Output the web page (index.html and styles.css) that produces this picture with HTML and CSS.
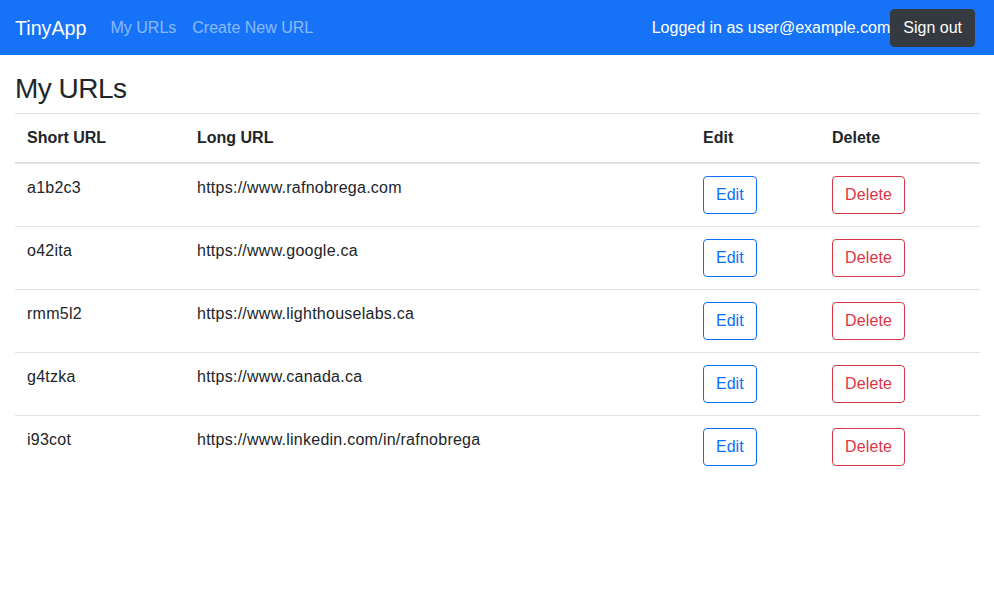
FILE: index.html
```html
<!DOCTYPE html>
<html lang="en">
<head>
<meta charset="utf-8">
<title>TinyApp</title>
<link rel="stylesheet" href="styles.css">
</head>
<body>
<nav class="navbar">
  <div class="nav-left">
    <a class="brand" href="#">TinyApp</a>
    <a class="nav-link" href="#">My URLs</a>
    <a class="nav-link" href="#">Create New URL</a>
  </div>
  <div class="nav-right">
    <span class="user">Logged in as user@example.com</span>
    <button class="btn btn-dark">Sign out</button>
  </div>
</nav>
<main class="content">
  <h3 class="title">My URLs</h3>
  <table class="table">
    <thead>
      <tr>
        <th class="c1">Short URL</th>
        <th class="c2">Long URL</th>
        <th class="c3">Edit</th>
        <th class="c4">Delete</th>
      </tr>
    </thead>
    <tbody>
      <tr><td>a1b2c3</td><td>https://www.rafnobrega.com</td><td><button class="btn btn-outline-primary">Edit</button></td><td><button class="btn btn-outline-danger">Delete</button></td></tr>
      <tr><td>o42ita</td><td>https://www.google.ca</td><td><button class="btn btn-outline-primary">Edit</button></td><td><button class="btn btn-outline-danger">Delete</button></td></tr>
      <tr><td>rmm5l2</td><td>https://www.lighthouselabs.ca</td><td><button class="btn btn-outline-primary">Edit</button></td><td><button class="btn btn-outline-danger">Delete</button></td></tr>
      <tr><td>g4tzka</td><td>https://www.canada.ca</td><td><button class="btn btn-outline-primary">Edit</button></td><td><button class="btn btn-outline-danger">Delete</button></td></tr>
      <tr><td>i93cot</td><td>https://www.linkedin.com/in/rafnobrega</td><td><button class="btn btn-outline-primary">Edit</button></td><td><button class="btn btn-outline-danger">Delete</button></td></tr>
    </tbody>
  </table>
</main>
</body>
</html>
```
FILE: styles.css
```css
* { box-sizing: border-box; }
body {
  margin: 0;
  font-family: "Liberation Sans", Arial, sans-serif;
  font-size: 16px;
  line-height: 1.5;
  color: #212529;
  background: #fff;
}
a { text-decoration: none; }
.navbar {
  display: flex;
  align-items: center;
  justify-content: space-between;
  height: 55px;
  padding: 0 19px 0 15px;
  background: #1673f8;
}
.nav-left { display: flex; align-items: center; }
.brand {
  color: #fff;
  font-size: 19.7px;
  line-height: 30px;
  margin-right: 16px;
}
.nav-link {
  color: rgba(255,255,255,0.5);
  padding: 8px;
}
.nav-right { display: flex; align-items: center; }
.user { color: #fff; }
.btn {
  font-family: inherit;
  font-size: 16px;
  line-height: 24px;
  padding: 6px 12px;
  border: 1px solid transparent;
  border-radius: 4px;
  background: transparent;
  cursor: pointer;
}
.btn-dark { background: #343a40; border-color: #343a40; color: #fff; }
.btn-outline-primary { color: #0d6efd; border-color: #0d6efd; }
.btn-outline-danger { color: #dc3545; border-color: #dc3545; letter-spacing: 0.15px; }
.content { padding: 17px 14px 0 15px; }
.title {
  margin: 0 0 7px;
  font-size: 28px;
  font-weight: 500;
  line-height: 1.2;
  letter-spacing: -0.5px;
}
.table {
  width: 100%;
  border-collapse: collapse;
}
.table th, .table td {
  padding: 12px;
  text-align: left;
  vertical-align: top;
  border-top: 1px solid #dee2e6;
}
.table th { font-weight: 700; }
.table td { letter-spacing: 0.25px; }
.table thead th { border-bottom: 2px solid #dee2e6; }
.c1 { width: 170px; }
.c2 { width: 506px; }
.c3 { width: 129px; }
```
